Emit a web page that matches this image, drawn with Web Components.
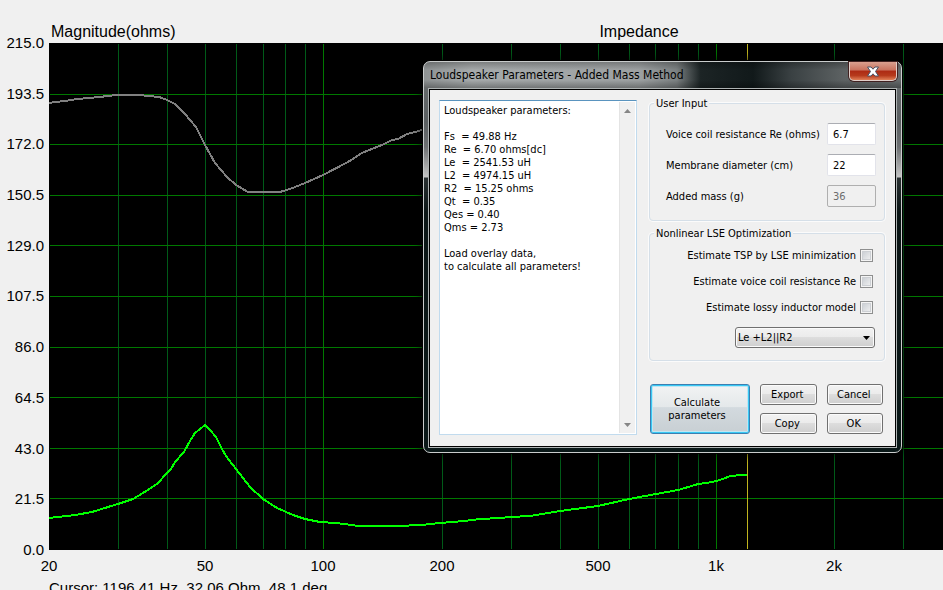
<!DOCTYPE html>
<html lang="en">
<head>
<meta charset="utf-8">
<title>Impedance</title>
<style>
html,body{margin:0;height:100%;overflow:hidden;background:#f0f0f0;color:#000}
</style>
</head>
<body>
<impedance-app></impedance-app>
<script>
const define=(name,html,init)=>customElements.define(name,class extends HTMLElement{
  constructor(){
    super();
    const t=document.createElement('template');
    t.innerHTML=html;
    this.attachShadow({mode:'open'}).append(t.content.cloneNode(true));
  }
  connectedCallback(){ if(init&&!this.ready){this.ready=true;init(this,this.shadowRoot);} }
});

/* The plot spans three decades, so it may be wider than the window that shows it. */
define('impedance-chart',`
<style>
:host{display:grid;grid-template-columns:49px minmax(1178px,1fr);grid-template-rows:43px 507px 28px auto;font:15px/20px "Liberation Sans",Arial,sans-serif}
header{grid-column:2;display:grid;grid-template-columns:1fr auto 1fr;align-items:end;padding:0 0 1px 2px;font-size:16px}
h1{font:inherit;margin:0}
.axis{display:flex;flex-direction:column;justify-content:space-between;text-align:right;margin:-10px 5px -10px 0}
.plot,.freq{display:block;width:100%;height:100%;overflow:hidden}
.freq{overflow:visible}
.plot{background:#000;shape-rendering:crispEdges}
.fx{grid-column:2}
text{text-anchor:middle}
footer{grid-column:2}
header span{white-space:nowrap}
</style>
<header><span>Magnitude(ohms)</span><h1>Impedance</h1></header>
<div class="axis"></div>
<svg class="plot" role="img" aria-label="Impedance magnitude and phase against frequency"></svg>
<div class="fx"><svg class="freq"></svg></div>
<footer>Cursor: 1196.41 Hz, 32.06 Ohm, 48.1 deg</footer>`,(el,root)=>{
  const xOf=f=>Math.round(392.6*Math.log10(f/20));
  const line=(x1,y1,x2,y2,c)=>`<line x1="${x1}" y1="${y1}" x2="${x2}" y2="${y2}" stroke="${c}"/>`;
  let s='';
  for(const f of [30,40,50,60,70,80,90,100,200,300,400,500,600,700,800,900,1000,2000,3000]){
    const x=xOf(f)+.5;
    s+=line(x,1,x,506,(f===100||f===1000)?'#007800':'#005a18');
  }
  for(let i=1;i<10;i++){const y=Math.round(i*50.6)+.5;s+=line(1,y,'100%',y,'#007800');}
  s+=line(698.5,1,698.5,506,'#c0b41e');
  const curve=(pts,c)=>`<polyline points="${pts}" fill="none" stroke="${c}" stroke-width="2"/>`;
  s+=curve('0,60 6,59 16,58 28,56 40,55 51,54 58,53 68,52 91,52 99,53 110,54 118,57 126,61 136,71 147,84 156,102 166,120 178,134 187,142 199,149 231,149 241,146 256,140 274,132 299,119 313,110 335,101 343,97 349,96 358,91 366,89 380,85','#808080');
  s+=curve('0,475 9,474 26,472 43,469 59,464 69,461 84,456 94,450 108,441 118,430 122,426 126,419 135,409 141,398 146,390 151,386 156,382 161,387 167,394 173,406 177,413 187,426 201,444 214,456 228,465 244,472 256,476 271,479 286,480 296,481 309,483 348,483 373,482 391,480 415,478 431,476 451,475 462,474 481,473 511,468 526,466 549,463 580,456 607,451 629,447 636,445 649,441 658,440 667,438 674,436 681,433 693,432 698,432','#00ff00');
  root.querySelector('.plot').innerHTML=s;
  root.querySelector('.axis').innerHTML=[215,193.5,172,150.5,129,107.5,86,64.5,43,21.5,0].map(v=>`<span>${v.toFixed(1)}</span>`).join('');
  root.querySelector('.freq').innerHTML=[[20,'20'],[50,'50'],[100,'100'],[200,'200'],[500,'500'],[1000,'1k'],[2000,'2k']].map(([f,t])=>`<text x="${xOf(f)}" y="21">${t}</text>`).join('');
});

define('aero-window',`
<style>
:host{display:block;box-sizing:border-box;border:1px solid #c9cccc;border-radius:7px;padding:0 4px 4px;color:#000;
box-shadow:0 0 0 1px #000,0 0 7px 3px rgba(0,0,0,.6);
background:linear-gradient(rgba(0,0,0,.25),transparent 8px,transparent 18px,rgba(0,0,0,.3)) top/100% 26px no-repeat,
linear-gradient(90deg,#8e9293 0,#a6aaab 10%,#9da1a2 45%,#7b8081 53%,#1c2425 58%,#11191a 69%,#3a4143 77%,#5d6263 88%,#666b6c) top/100% 26px no-repeat,
linear-gradient(#6d7172 0,#5a5f61 60px,#6d7072 85px,#c4c4c4 115px,#2a3132 116px,#0c1616 150px,#0a1818);}
header{display:flex;justify-content:space-between;height:26px;font:12px/27px "DejaVu Sans Condensed",Tahoma,sans-serif}
h2{font:inherit;margin:0;padding:0 2px;white-space:nowrap}
button{width:48px;height:19px;padding:0;border:1px solid #e0cdc8;border-top:0;border-radius:0 0 5px 5px;display:grid;place-items:center;
background:linear-gradient(#d9a08f 0,#c8715d 45%,#ad2a14 50%,#b63a1c 75%,#e08058);box-shadow:0 0 0 1px #402020}
svg{display:block}
.client{border:1px solid #aeb3b3;outline:1px solid #000;outline-offset:-2px;padding:1px;background:#f0f0f0}
</style>
<header><h2></h2><button type="button" aria-label="Close"><svg width="14" height="11" viewBox="0 0 14 11"><path d="M1.5 1H5l2 2.200L9 1h3.500L9.500 5.500l3 4.500H9L7 7.800 5 10H1.500L4.500 5.500z" fill="#fff" stroke="#4b5062"/></svg></button></header>
<div class="client"><slot></slot></div>`,(el,root)=>{root.querySelector('h2').textContent=el.getAttribute('heading');});

define('report-box',`
<style>
:host{display:flex;box-sizing:border-box;background:#fff;border:1px solid #c1dbee;border-top-color:#5a94bf;padding:1px}
textarea{flex:1;min-width:0;border:0;outline:0;resize:none;overflow:hidden;margin:0;padding:2px 3px;background:#fff;color:#000;font:11px/13px "DejaVu Sans Condensed",Tahoma,sans-serif;white-space:pre}
.bar{width:16px;box-sizing:border-box;background:#f0f0f0;border-left:1px solid #e4e4e4;display:flex;flex-direction:column;justify-content:space-between}
button{height:17px;border:0;padding:0;background:none;display:grid;place-items:center}
</style>
<textarea readonly aria-label="Loudspeaker parameters"></textarea>
<div class="bar"><button type="button" aria-label="Scroll up"><svg width="7" height="4"><path d="M0 4 3.500 0 7 4z" fill="#868686"/></svg></button>
<button type="button" aria-label="Scroll down"><svg width="7" height="4"><path d="M0 0H7L3.500 4z" fill="#868686"/></svg></button></div>`,(el,root)=>{root.querySelector('textarea').value=el.textContent.trim();});

define('group-box',`
<style>
:host{display:block}
fieldset{margin:0;min-width:0;box-sizing:border-box;height:100%;border:1px solid #d5dfe8;border-radius:4px;padding:0 8px 0 16px;box-shadow:0 0 0 1px #fbfbfb}
legend{padding:0 2px;margin-left:-12px;background:#f0f0f0;line-height:13px}
</style>
<fieldset><legend></legend><slot></slot></fieldset>`,(el,root)=>{root.querySelector('legend').textContent=el.getAttribute('heading');});

define('number-row',`
<style>
:host{display:flex;justify-content:space-between;align-items:center}
input{box-sizing:border-box;width:49px;height:22px;margin:0;padding:0 5px;border:1px solid #e2e3ea;border-top-color:#abadb3;border-radius:2px;background:#fff;color:#000;font:inherit}
input:disabled{background:#f0f0f0;color:#6d6d6d;border-color:#afafaf}
</style>
<label for="v"></label><input id="v" type="text">`,(el,root)=>{
  root.querySelector('label').textContent=el.getAttribute('label');
  const i=root.querySelector('input');i.value=el.getAttribute('value');i.disabled=el.hasAttribute('disabled');
});

define('check-row',`
<style>
:host{display:flex;justify-content:flex-end;align-items:center;gap:4px;height:13px;margin-right:2px}
input{appearance:none;box-sizing:border-box;width:13px;height:13px;margin:0;border:1px solid #8e8f8f;background:linear-gradient(135deg,#c3c8ce,#f6f6f6) padding-box;box-shadow:inset 0 0 0 1px #f4f4f4,inset 0 0 0 2px #cdd0d4}
</style>
<label for="c"></label><input id="c" type="checkbox">`,(el,root)=>{root.querySelector('label').textContent=el.getAttribute('label');});

define('aero-select',`
<style>
:host{display:grid;align-items:center}
select,svg{grid-area:1/1}
select{appearance:none;box-sizing:border-box;width:140px;height:21px;margin:0;padding:0 2px;border:1px solid #707070;border-radius:3px;color:#000;font:inherit;
background:linear-gradient(#f2f2f2 0,#ebebeb 49%,#dddddd 50%,#cfcfcf);box-shadow:inset 0 0 0 1px #fbfbfb}
svg{justify-self:end;margin-right:5px;pointer-events:none}
</style>
<select aria-label="Inductor model"><option>Le +L2||R2</option></select><svg width="7" height="4"><path d="M0 0H7L3.500 4z"/></svg>`);

define('aero-button',`
<style>
:host{display:grid}
button{box-sizing:border-box;width:100%;height:100%;padding:0 14px 0 8px;border:1px solid #707070;border-radius:3px;color:#000;font:inherit;
background:linear-gradient(#f2f2f2 0,#ebebeb 49%,#dddddd 50%,#cfcfcf);box-shadow:inset 0 0 0 1px #fbfbfb}
:host(:not([primary])) button{padding:0 2px 0 0}
:host([primary]) button{border-color:#3c7fb1;background:linear-gradient(#f2f3f4 0,#e4e8ea 46%,#d3dadf 47%,#c8cfd3);box-shadow:inset 0 0 0 1px #38c8f4,inset 0 0 0 2px #bfe6f3}
</style>
<button type="button"><slot></slot></button>`);

define('parameters-dialog',`
<style>
:host{display:block;font:11px/13px "DejaVu Sans Condensed",Tahoma,sans-serif}
.body{display:grid;grid-template-columns:198px 1fr;gap:12px;padding:10px 10px 11px 9px}
.side{display:flex;flex-direction:column;margin-top:-3px}
.rows{display:grid;gap:9px;padding:13px 0}
.checks{display:grid;justify-items:end;gap:13px;padding:9px 1px 12px 0}
.second{margin-top:6px}
.buttons{display:grid;grid-template-columns:100px 1fr 1fr;grid-template-rows:21px 21px;gap:8px 10px;margin:23px 2px 1px 1px}
.buttons aero-button:first-child{grid-row:span 2}
</style>
<aero-window heading="Loudspeaker Parameters - Added Mass Method">
<div class="body">
<report-box>Loudspeaker parameters:

Fs  = 49.88 Hz
Re  = 6.70 ohms[dc]
Le  = 2541.53 uH
L2  = 4974.15 uH
R2  = 15.25 ohms
Qt  = 0.35
Qes = 0.40
Qms = 2.73

Load overlay data,
to calculate all parameters!</report-box>
<div class="side">
<group-box heading="User Input"><div class="rows">
<number-row label="Voice coil resistance Re (ohms)" value="6.7"></number-row>
<number-row label="Membrane diameter (cm)" value="22"></number-row>
<number-row label="Added mass (g)" value="36" disabled></number-row></div></group-box>
<group-box class="second" heading="Nonlinear LSE Optimization"><div class="checks">
<check-row label="Estimate TSP by LSE minimization"></check-row>
<check-row label="Estimate voice coil resistance Re"></check-row>
<check-row label="Estimate lossy inductor model"></check-row>
<aero-select></aero-select></div></group-box>
<div class="buttons"><aero-button primary>Calculate parameters</aero-button><aero-button>Export</aero-button><aero-button>Cancel</aero-button><aero-button>Copy</aero-button><aero-button>OK</aero-button></div>
</div></div></aero-window>`);

define('impedance-app',`
<style>
:host{display:block;position:relative;height:100%;overflow:hidden}
parameters-dialog{position:absolute;left:423px;top:61px;width:479px}
</style>
<impedance-chart></impedance-chart><parameters-dialog></parameters-dialog>`);
</script>
</body>
</html>
